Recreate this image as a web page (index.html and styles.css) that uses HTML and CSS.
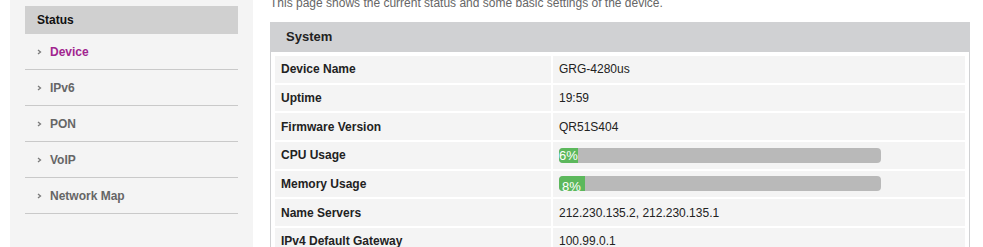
FILE: index.html
```html
<!DOCTYPE html>
<html lang="en">
<head>
    <meta charset="UTF-8">
    <title>Device Status</title>
    <link rel="stylesheet" href="styles.css">
</head>
<body>
    <div class="page">
        <div class="sidebar">
            <div class="side-title">Status</div>
            <ul class="menu">
                <li class="active"><svg class="arrow" width="5" height="6" viewBox="0 0 5 6"><polyline points="1,1 3.5,3 1,5" fill="none" stroke="#7a7a7a" stroke-width="1.3"/></svg>Device</li>
                <li><svg class="arrow" width="5" height="6" viewBox="0 0 5 6"><polyline points="1,1 3.5,3 1,5" fill="none" stroke="#7a7a7a" stroke-width="1.3"/></svg>IPv6</li>
                <li><svg class="arrow" width="5" height="6" viewBox="0 0 5 6"><polyline points="1,1 3.5,3 1,5" fill="none" stroke="#7a7a7a" stroke-width="1.3"/></svg>PON</li>
                <li><svg class="arrow" width="5" height="6" viewBox="0 0 5 6"><polyline points="1,1 3.5,3 1,5" fill="none" stroke="#7a7a7a" stroke-width="1.3"/></svg>VoIP</li>
                <li><svg class="arrow" width="5" height="6" viewBox="0 0 5 6"><polyline points="1,1 3.5,3 1,5" fill="none" stroke="#7a7a7a" stroke-width="1.3"/></svg>Network Map</li>
            </ul>
        </div>

        <div class="main">
            <p class="intro">This page shows the current status and some basic settings of the device.</p>
            <div class="panel">
                <div class="panel-head">System</div>
                <div class="panel-body">
                    <table class="info">
                        <tr><td class="label">Device Name</td><td>GRG-4280us</td></tr>
                        <tr><td class="label">Uptime</td><td>19:59</td></tr>
                        <tr><td class="label">Firmware Version</td><td>QR51S404</td></tr>
                        <tr><td class="label">CPU Usage</td><td><div class="bar"><div class="fill" style="width: 6%"><span class="pct">6%</span></div></div></td></tr>
                        <tr><td class="label">Memory Usage</td><td><div class="bar"><div class="fill" style="width: 8%"><span class="pct low">8%</span></div></div></td></tr>
                        <tr><td class="label">Name Servers</td><td>212.230.135.2, 212.230.135.1</td></tr>
                        <tr><td class="label">IPv4 Default Gateway</td><td>100.99.0.1</td></tr>
                    </table>
                </div>
            </div>
        </div>
    </div>
</body>
</html>
```

FILE: styles.css
```css
body { margin: 0; font-family: "Liberation Sans", Arial, sans-serif; font-size: 12px; color: #222; background: #fff; overflow: hidden; }
.page { display: flex; padding-left: 10px; gap: 17px; }

.sidebar { width: 213px; min-height: 260px; padding: 6px 15px 0; background: #f4f4f4; }
.side-title { height: 28px; line-height: 28px; padding-left: 12px; background: #d0d0d0; font-weight: bold; color: #111; }
.menu { list-style: none; margin: 0; padding: 0; }
.menu li { display: flex; align-items: center; height: 35px; border-bottom: 1px solid #c9c9c9; padding-left: 12px; font-weight: bold; color: #666; }
.menu li.active { color: #a1258f; }
.arrow { margin-right: 8px; }

.main { width: 700px; }
.intro { margin: -4px 0 0; height: 26px; line-height: 14px; color: #666; }
.panel { border: 1px solid #d0d1d3; border-top: none; }
.panel-head { height: 30px; line-height: 30px; padding-left: 15px; background: #d0d1d3; font-size: 13px; font-weight: bold; color: #222; }
.panel-body { padding: 2px 2px 0; }

.info { width: 100%; border-spacing: 2px; }
.info td { height: 26.67px; padding: 0 6px; background: #f4f4f4; line-height: 14px; vertical-align: middle; }
.info td.label { width: 264px; font-weight: bold; }

.bar { width: 322px; height: 15px; border-radius: 4px; background: #b9b9b9; overflow: hidden; }
.fill { height: 15px; background: #5cb85c; white-space: nowrap; }
.pct { display: block; font-size: 13px; line-height: 15px; color: #fff; }
.pct.low { padding: 3px 0 0 3px; }
```
